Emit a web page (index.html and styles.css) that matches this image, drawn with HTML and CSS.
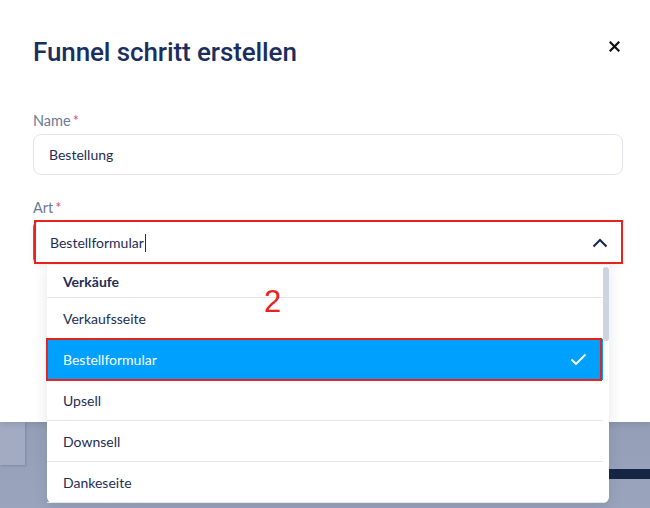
FILE: index.html
```html
<!DOCTYPE html>
<html lang="de">
<head>
    <meta charset="UTF-8">
    <meta name="viewport" content="width=device-width, initial-scale=1.0">
    <title>Funnel schritt erstellen</title>
    <link rel="stylesheet" href="styles.css">
</head>
<body>
    <div class="backdrop">
        <div class="bg-card"></div>
        <div class="bg-bar"></div>
    </div>

    <div class="modal">
        <div class="modal-head">
            <h1>Funnel schritt erstellen</h1>
            <button class="close-btn" aria-label="Schließen">
                <svg width="11" height="11" viewBox="0 0 11 11"><path d="M1.5 1.5 L9.5 9.5 M9.5 1.5 L1.5 9.5" stroke="#111" stroke-width="2.2" stroke-linecap="square"/></svg>
            </button>
        </div>

        <div class="field">
            <label>Name<span class="req">*</span></label>
            <div class="input">Bestellung</div>
        </div>

        <div class="field">
            <label>Art<span class="req">*</span></label>
            <div class="select">
                <div class="input input-focus">
                    <span>Bestellformular</span><span class="caret"></span>
                    <svg class="chevron" width="16" height="10" viewBox="0 0 16 10"><path d="M1.5 8.5 L8 2 L14.5 8.5" fill="none" stroke="#1b2b55" stroke-width="2.2"/></svg>
                </div>
                <div class="mark mark-field"></div>

                <ul class="menu">
                    <li class="group">Verkäufe</li>
                    <li>Verkaufsseite</li>
                    <li class="active">Bestellformular
                        <svg width="17" height="13" viewBox="0 0 17 13"><path d="M1.5 6.5 L6 11 L15.5 1.5" fill="none" stroke="#fff" stroke-width="1.8"/></svg>
                        <span class="mark"></span>
                    </li>
                    <li>Upsell</li>
                    <li>Downsell</li>
                    <li>Dankeseite</li>
                    <li class="scroll-thumb"></li>
                </ul>
                <span class="step-no">2</span>
            </div>
        </div>
    </div>
</body>
</html>
```

FILE: styles.css
```css
* { box-sizing: border-box; }
body { margin: 0; width: 650px; height: 508px; overflow: hidden; font-family: Lato, "Noto Sans", sans-serif; color: #1f2d55; background: #97a1b9; position: relative; }

.backdrop { position: absolute; left: 0; top: 422px; width: 650px; height: 86px; background: linear-gradient(#949eb6, #9aa4bc); }
.bg-card { position: absolute; left: 0; top: 0; width: 25px; height: 43px; background: #a2abc1; box-shadow: 1px 1px 2px rgba(60, 70, 100, 0.25); }
.bg-bar { position: absolute; left: 609px; top: 47px; width: 41px; height: 10px; background: #172544; }

.modal { position: relative; height: 422px; background: #fff; padding: 36px 27px 0 33px; box-shadow: 0 2px 6px rgba(40, 50, 80, 0.15); }
.modal-head { display: flex; justify-content: space-between; align-items: flex-start; }
h1 { margin: 0; font-family: Roboto, sans-serif; font-weight: 500; font-size: 26px; line-height: 32px; color: #1b2f5e; letter-spacing: -0.1px; }
.close-btn { border: none; background: none; padding: 0; margin-top: 4px; margin-right: 3px; cursor: pointer; }

.field { margin-top: 44px; }
.field + .field { margin-top: 24px; }
label { display: block; font-size: 14.5px; line-height: 18px; color: #6b7a93; margin-bottom: 4px; }
.req { color: #ec4d6d; margin-left: 2px; }

.input { height: 41px; border: 1px solid #e2e5eb; border-radius: 8px; padding: 0 15px; display: flex; align-items: center; font-size: 14px; color: #1f2d55; }
.select { position: relative; }
.input-focus { height: 43px; border: none; border-left: 2px solid #1a8fe0; border-radius: 6px 0 0 6px; box-shadow: 0 3px 6px rgba(30, 40, 70, 0.06); }
.caret { display: inline-block; width: 1px; height: 18px; background: #1f2d55; margin-left: 1px; }
.chevron { margin-left: auto; margin-right: 0; }

.mark { position: absolute; left: -1px; top: -1px; right: -1px; bottom: -1px; border: 2px solid #e8231c; pointer-events: none; }
.mark-field { left: 1px; top: -1px; right: 0; bottom: 0; }

.menu { position: absolute; left: 14px; top: 44px; width: 562px; margin: 0; padding: 0 6px 0 0; list-style: none; background: #fff; border-radius: 0 0 6px 6px; box-shadow: 0 4px 14px rgba(30, 40, 70, 0.12); }
.menu li { position: relative; height: 41px; display: flex; align-items: center; padding: 0 16px; font-size: 14px; border-bottom: 1px solid #e4e6ea; }
.menu li.group { height: 33px; font-weight: 700; }
.menu li.active { background: #00a0ff; color: #fff; justify-content: space-between; border-bottom: none; }
.menu li.active .mark { right: 1px; }
.menu li.scroll-thumb { position: absolute; right: 0; top: 2px; width: 6px; height: 74px; padding: 0; border: none; border-radius: 3px; background: #cdd4e0; }

.step-no { position: absolute; left: 231px; top: 64px; font-family: "Liberation Sans", Arial, sans-serif; font-size: 31px; line-height: 34px; color: #e8231c; }
```
